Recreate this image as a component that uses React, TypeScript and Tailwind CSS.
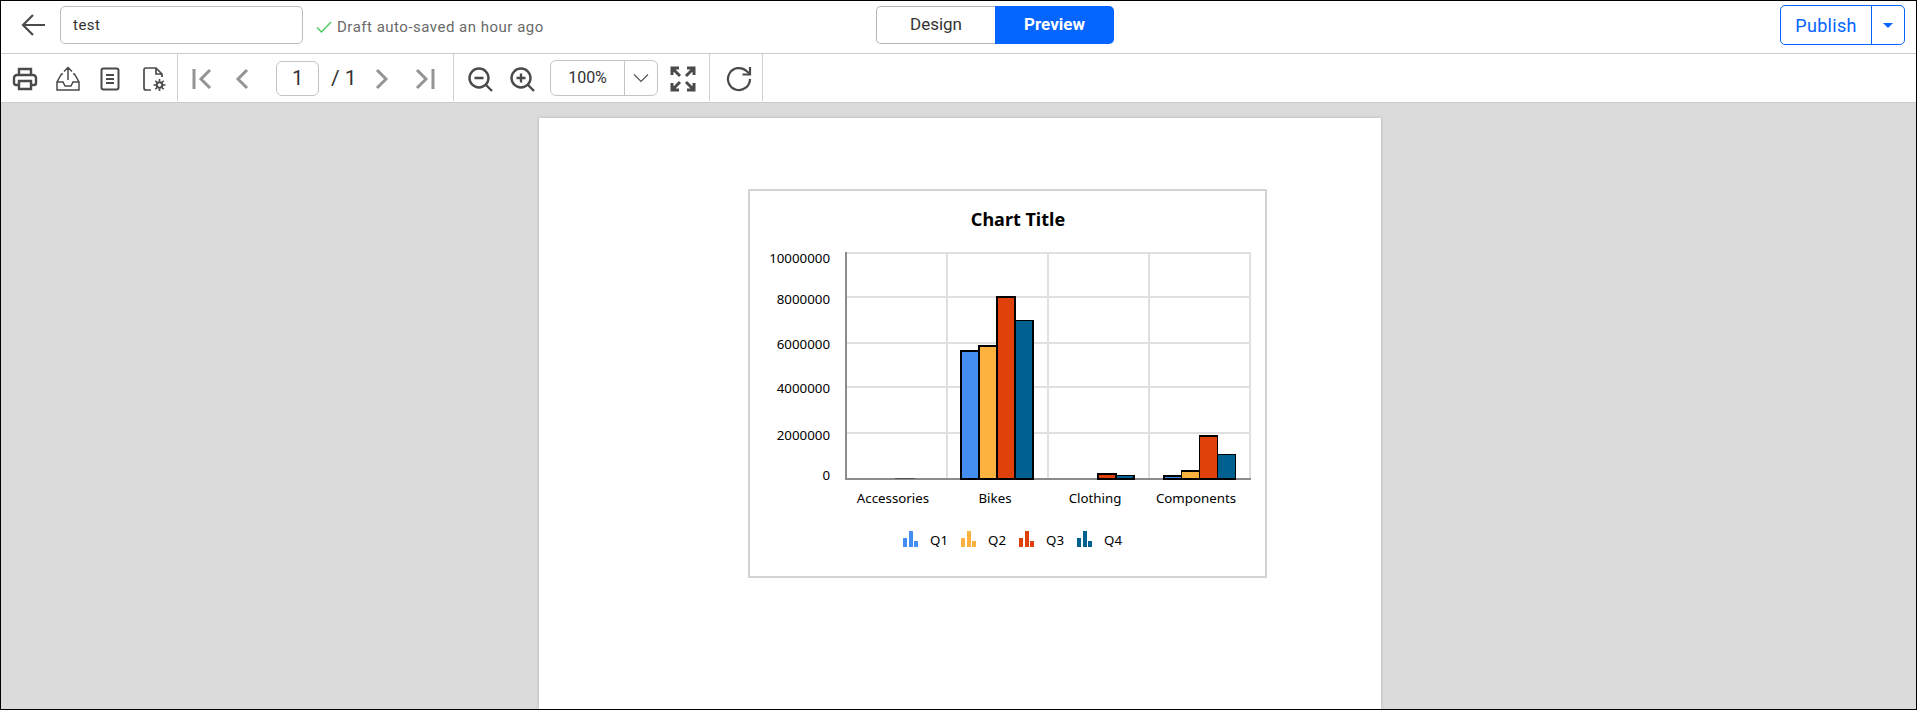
const ink = "#4a4a4a";

function ToolIcon({ children, className }: { children: React.ReactNode; className: string }) {
  return (
    <svg viewBox="0 0 28 28" fill="none" stroke={ink} strokeWidth="2" className={`mt-[2px] h-7 w-7 shrink-0 ${className}`}>
      {children}
    </svg>
  );
}

function Sep({ className }: { className: string }) {
  return <div className={`h-[47px] w-px shrink-0 self-start bg-[#cfcfcf] ${className}`} />;
}

const yLabels = [
  { text: "10000000", y: 263 },
  { text: "8000000", y: 304 },
  { text: "6000000", y: 349 },
  { text: "4000000", y: 393 },
  { text: "2000000", y: 440 },
  { text: "0", y: 480 },
];

const bars = [
  { x: 961, w: 18, top: 351, fill: "#448ef1" },
  { x: 979, w: 18, top: 346, fill: "#fdb23f" },
  { x: 997, w: 18, top: 297, fill: "#e0410a" },
  { x: 1015, w: 18, top: 320.5, fill: "#00608f" },
  { x: 1098, w: 18, top: 474, fill: "#e0410a" },
  { x: 1116, w: 18, top: 475.5, fill: "#00608f" },
  { x: 1164, w: 17.5, top: 476, fill: "#448ef1" },
  { x: 1181.5, w: 18, top: 471, fill: "#fdb23f" },
  { x: 1199.5, w: 18, top: 436, fill: "#e0410a" },
  { x: 1217.5, w: 18, top: 454.5, fill: "#00608f" },
];

const legend = [
  { x: 903, fill: "#448ef1", label: "Q1", tx: 930 },
  { x: 961, fill: "#fdb23f", label: "Q2", tx: 988 },
  { x: 1019, fill: "#e0410a", label: "Q3", tx: 1046 },
  { x: 1077, fill: "#00608f", label: "Q4", tx: 1104 },
];

function Chart() {
  return (
    <svg viewBox="748 189 519 389" className="h-[389px] w-[519px]" fontFamily="'Noto Sans', sans-serif" shapeRendering="crispEdges">
      <rect x="749" y="190" width="517" height="387" fill="#fff" stroke="#d3d3d3" strokeWidth="2" />
      <text x="1018" y="226" textAnchor="middle" fontSize="18" fontWeight="700" fill="#000" shapeRendering="auto">Chart Title</text>
      <g stroke="#e0e0e0" strokeWidth="2">
        {[253, 297, 343, 387, 433].map((y) => (
          <line key={y} x1="845" x2="1251" y1={y} y2={y} />
        ))}
        {[947, 1048, 1149, 1250].map((x) => (
          <line key={x} x1={x} x2={x} y1="252" y2="479" />
        ))}
      </g>
      <line x1="845.5" x2="845.5" y1="252" y2="480" stroke="#8c8c8c" strokeWidth="2" />
      <line x1="845" x2="1251" y1="479" y2="479" stroke="#8c8c8c" strokeWidth="2" />
      <line x1="895" x2="915" y1="478.5" y2="478.5" stroke="#555" />
      {bars.map((b) => (
        <rect key={b.x} x={b.x} y={b.top} width={b.w} height={479 - b.top} fill={b.fill} stroke="#000" strokeWidth="1.6" />
      ))}
      <g fontSize="13.3" fill="#000">
        {yLabels.map((l) => (
          <text key={l.text} x="830" y={l.y} textAnchor="end">{l.text}</text>
        ))}
        <text x="893" y="503" textAnchor="middle">Accessories</text>
        <text x="995" y="503" textAnchor="middle">Bikes</text>
        <text x="1095" y="503" textAnchor="middle">Clothing</text>
        <text x="1196" y="503" textAnchor="middle">Components</text>
        {legend.map((l) => (
          <g key={l.label}>
            <rect x={l.x} y="538" width="4" height="9" fill={l.fill} />
            <rect x={l.x + 6} y="531" width="4" height="16" fill={l.fill} />
            <rect x={l.x + 11} y="541" width="4" height="6" fill={l.fill} />
            <text x={l.tx} y="545">{l.label}</text>
          </g>
        ))}
      </g>
    </svg>
  );
}

export default function App() {
  return (
    <div className="flex h-[710px] w-[1917px] flex-col overflow-hidden border border-black bg-white font-['Roboto',sans-serif]">
      <header className="flex h-[53px] shrink-0 items-center border-b border-[#cccccc]">
        <svg viewBox="0 0 24 22" fill="none" stroke={ink} strokeWidth="2.2" className="ml-[20px] mt-[-5px] h-[22px] w-[24px] shrink-0">
          <path d="M24 11H2M12 1 2 11l10 10" />
        </svg>
        <input
          readOnly
          value="test"
          className="ml-[15px] mt-[-4px] h-[38px] w-[243px] rounded-[5px] border border-[#bdbdbd] px-[12px] text-[15px] tracking-[0.5px] text-[#333] outline-none"
        />
        <svg viewBox="0 0 16 12" fill="none" stroke="#4fc75b" strokeWidth="1.4" className="ml-[13px] h-[12px] w-[16px] shrink-0">
          <path d="M1 6.5 5.5 11 15 1" />
        </svg>
        <span className="ml-[5px] w-[210px] whitespace-nowrap text-[15px] tracking-[0.5px] text-[#6a6a6a]">Draft auto-saved an hour ago</span>
        <div className="ml-[329px] mt-[-4px] flex h-[38px] w-[238px] text-[17px]">
          <div className="flex w-[119px] items-center justify-center rounded-l-[5px] border border-r-0 border-[#b5b5b5] text-[#333]">Design</div>
          <div className="flex w-[119px] items-center justify-center rounded-r-[5px] bg-[#0565ff] font-bold text-white">Preview</div>
        </div>
        <div className="ml-[666px] mt-[-4px] flex h-[40px] w-[125px] rounded-[5px] border border-[#0565ff] text-[#0565ff]">
          <div className="flex w-[91px] items-center justify-center border-r border-[#0565ff] text-[18px] tracking-[0.3px]">Publish</div>
          <div className="flex flex-1 items-center justify-center">
            <div className="h-0 w-0 border-x-[5px] border-t-[5px] border-x-transparent border-t-[#0565ff]" />
          </div>
        </div>
      </header>

      <div className="flex h-[49px] shrink-0 items-center border-b border-[#cccccc]">
        <ToolIcon className="ml-[10px]">
          <path strokeWidth="2.4" d="M8 10V4h12v6M8 20H5a2 2 0 0 1-2-2v-5a3 3 0 0 1 3-3h16a3 3 0 0 1 3 3v5a2 2 0 0 1-2 2h-3M8 16h12v8H8z" />
        </ToolIcon>
        <ToolIcon className="ml-[15px]">
          <path strokeWidth="1.5" d="M14 15V3M10 6.5 14 2.5l4 4M9 9H7.5L3 17v8h22v-8L20.500 9H19M3 17h6l2 4h6l2-4h6" />
        </ToolIcon>
        <ToolIcon className="ml-[14px]">
          <rect x="5.500" y="3.500" width="17" height="21" rx="2" />
          <path d="M10 10h8M10 14h8M10 18h8" />
        </ToolIcon>
        <ToolIcon className="ml-[15px]">
          <path strokeWidth="1.7" d="M12 25H7a2 2 0 0 1-2-2V5a2 2 0 0 1 2-2h10l6 6v3M17 3v6h6" />
          <circle cx="20.5" cy="20" r="2.800" strokeWidth="2" />
          <path strokeWidth="1.6" d="M20.500 14v2.500M20.500 23.500V26M14.500 20H17M24 20h2.500M16.300 15.800l1.700 1.700M23 22.500l1.700 1.700M16.300 24.200l1.700-1.700M23 17.500l1.700-1.700" />
        </ToolIcon>
        <Sep className="ml-[10px]" />
        <svg viewBox="0 0 24 24" fill="none" stroke="#949494" strokeWidth="3" className="ml-[13px] mt-[2px] h-6 w-6 shrink-0">
          <path d="M3 2v20M19 3 10 12l9 9" />
        </svg>
        <svg viewBox="0 0 24 24" fill="none" stroke="#949494" strokeWidth="3" className="ml-[15px] mt-[2px] h-6 w-6 shrink-0">
          <path d="M17 3 8 12l9 9" />
        </svg>
        <div className="ml-[22px] flex h-[35px] w-[43px] shrink-0 items-center justify-center rounded-[6px] border border-[#c4c4c4] text-[20px] text-[#333]">1</div>
        <span className="ml-[12px] mt-[2px] w-[30px] shrink-0 whitespace-nowrap text-[21px] text-[#333]">/ 1</span>
        <svg viewBox="0 0 24 24" fill="none" stroke="#949494" strokeWidth="3" className="ml-[9px] mt-[2px] h-6 w-6 shrink-0">
          <path d="m7 3 9 9-9 9" />
        </svg>
        <svg viewBox="0 0 24 24" fill="none" stroke="#949494" strokeWidth="3" className="ml-[18px] mt-[2px] h-6 w-6 shrink-0">
          <path d="M21 2v20M5 3l9 9-9 9" />
        </svg>
        <Sep className="ml-[17px]" />
        <ToolIcon className="ml-[12px]">
          <circle cx="13" cy="13" r="9.500" strokeWidth="2.4" />
          <path d="m20 20 6 6M8.500 13h9" strokeWidth="2.4" />
        </ToolIcon>
        <ToolIcon className="ml-[14px]">
          <circle cx="13" cy="13" r="9.500" strokeWidth="2.4" />
          <path d="m20 20 6 6M8.500 13h9M13 8.500v9" strokeWidth="2.4" />
        </ToolIcon>
        <div className="ml-[14px] flex h-[36px] w-[108px] shrink-0 rounded-[6px] border border-[#c4c4c4]">
          <div className="flex w-[74px] items-center justify-center border-r border-[#c4c4c4] text-[16px] text-[#333]">100%</div>
          <div className="flex flex-1 items-center justify-center">
            <svg viewBox="0 0 16 10" fill="none" stroke="#555" strokeWidth="1.2" className="h-[10px] w-4">
              <path d="m1 1.500 7 7 7-7" />
            </svg>
          </div>
        </div>
        <ToolIcon className="ml-[11px]">
          <path strokeWidth="3" d="M3 10V3h7M3 3l8 8M18 3h7v7M25 3l-8 8M3 18v7h7M3 25l8-8M25 18v7h-7M25 25l-8-8" />
        </ToolIcon>
        <Sep className="ml-[12px]" />
        <ToolIcon className="ml-[15px]">
          <path strokeWidth="2.2" d="M25 14a11 11 0 1 1-3.500-8L25 9M25 2v7.500h-7.500" />
        </ToolIcon>
        <Sep className="ml-[9px]" />
      </div>

      <main className="min-h-0 flex-1 bg-[#dbdbdb] pl-[538px] pt-[15px]">
        <div className="h-[640px] w-[842px] bg-white pl-[209px] pt-[71px] shadow-[0_0_3px_rgba(0,0,0,0.2)]">
          <Chart />
        </div>
      </main>
    </div>
  );
}
